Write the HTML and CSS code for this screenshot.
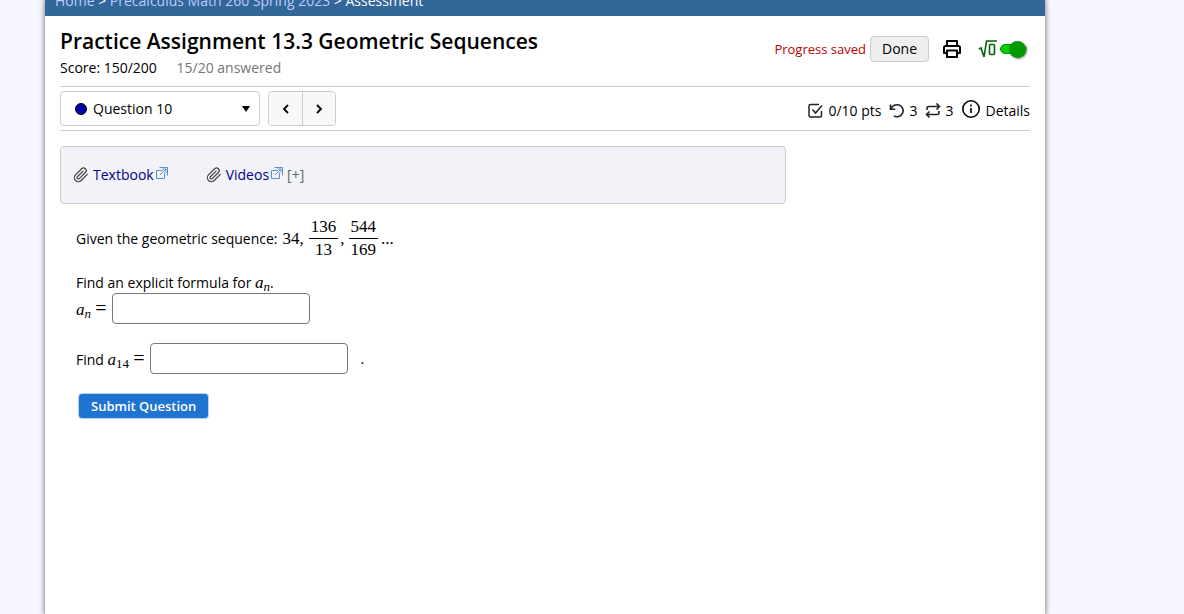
FILE: index.html
```html
<!DOCTYPE html>
<html lang="en">
<head>
    <meta charset="UTF-8">
    <meta name="viewport" content="width=device-width, initial-scale=1.0">
    <title>Practice Assignment 13.3 Geometric Sequences</title>
    <link rel="stylesheet" href="styles.css">
</head>
<body>
    <div class="page">
        <nav class="breadcrumb">
            <div><a href="#">Home</a> &gt; <a href="#">Precalculus Math 260 Spring 2023</a> &gt; Assessment</div>
        </nav>

        <div class="content">
            <header class="assess-header">
                <div class="assess-info">
                    <h1>Practice Assignment 13.3 Geometric Sequences</h1>
                    <p class="score">Score: 150/200 <span class="answered">15/20 answered</span></p>
                </div>
                <div class="assess-actions">
                    <span class="saved">Progress saved</span>
                    <button type="button" class="done-button">Done</button>
                    <button type="button" class="icon-button" aria-label="Print">
                        <svg width="20" height="20" viewBox="0 0 20 20" fill="none" stroke="#000" stroke-width="2" stroke-linejoin="round">
                            <path d="M5 6V2h10v4M5 14H2V8.500Q2 7 3.500 7h13Q18 7 18 8.500V14h-3"/>
                            <path d="M5 11.500h10V18H5z"/>
                        </svg>
                    </button>
                    <label class="math-toggle">
                        <svg width="20" height="20" viewBox="0 0 20 20" fill="none" stroke="#006400" stroke-width="1.600" role="img" aria-label="Math input">
                            <path d="M1 10l2-1 3 9L8.500 2H19"/>
                            <rect x="11.500" y="5.500" width="5" height="10" rx="1"/>
                        </svg>
                        <input type="checkbox" class="toggle" checked>
                    </label>
                </div>
            </header>

            <div class="question-bar">
                <div class="question-nav">
                    <div class="question-picker">
                        <span class="status-dot"></span>
                        <select aria-label="Question">
                            <option>Question 10</option>
                        </select>
                        <svg class="caret" width="8" height="6" viewBox="0 0 8 6"><path d="M0 0h8L4 6z"/></svg>
                    </div>
                    <div class="pager">
                        <button type="button" aria-label="Previous question">
                            <svg width="8" height="10" viewBox="0 0 8 10" fill="none" stroke="#000" stroke-width="1.800"><path d="M6 1L2 5l4 4"/></svg>
                        </button>
                        <button type="button" aria-label="Next question">
                            <svg width="8" height="10" viewBox="0 0 8 10" fill="none" stroke="#000" stroke-width="1.800"><path d="M2 1l4 4-4 4"/></svg>
                        </button>
                    </div>
                </div>
                <div class="question-stats">
                    <span class="stat">
                        <svg width="16" height="16" viewBox="0 0 16 16" fill="none" stroke="#222" stroke-width="1.500">
                            <path d="M11 1.500H2.500Q1 1.500 1 3v9.500Q1 14 2.500 14H12q1.500 0 1.500-1.500V8"/>
                            <path d="M4.500 6.500l3 3.500 6.500-7.500"/>
                        </svg>
                        0/10 pts
                    </span>
                    <span class="stat">
                        <svg width="16" height="16" viewBox="0 0 16 16" fill="none" stroke="#222" stroke-width="1.600">
                            <path d="M1.500 1.500v4.700H6.200"/>
                            <path d="M2 6A6.200 6 0 1 1 5 13"/>
                        </svg>
                        3
                    </span>
                    <span class="stat">
                        <svg width="16" height="16" viewBox="0 0 16 16" fill="none" stroke="#222" stroke-width="1.600">
                            <path d="M11.500.5l3 3-3 3M14.500 3.500H4Q2 3.500 2 5.500V7"/>
                            <path d="M4.500 8.500l-3 3 3 3M1.500 11.500H12q2 0 2-2V8"/>
                        </svg>
                        3
                    </span>
                    <button type="button" class="details-button">
                        <svg class="info" width="20" height="20" viewBox="0 0 20 20" fill="none" stroke="#000" stroke-width="1.600">
                            <circle cx="10" cy="10" r="8.200"/>
                            <path d="M10 9v5M10 5.500v2"/>
                        </svg>
                        Details
                    </button>
                </div>
            </div>

            <div class="help-box">
                <div class="help-item">
                    <svg width="16" height="16" viewBox="0 0 24 24" fill="none" stroke="#444" stroke-width="1.800" stroke-linecap="round">
                        <path d="M21.440 11.050l-9.190 9.190a6 6 0 0 1-8.490-8.490l9.190-9.190a4 4 0 0 1 5.660 5.660l-9.200 9.190a2 2 0 0 1-2.830-2.830l8.490-8.480"/>
                    </svg>
                    <a href="#">Textbook</a>
                    <svg class="external" width="12" height="12" viewBox="0 0 12 12" fill="none" stroke="#5b94c4">
                        <path d="M6.500 3.500h-6v8h8v-6M3.500.5h8v8M4 8l6-6M6.500 2h3.500v3.500"/>
                    </svg>
                </div>
                <div class="help-item">
                    <svg width="16" height="16" viewBox="0 0 24 24" fill="none" stroke="#444" stroke-width="1.800" stroke-linecap="round">
                        <path d="M21.440 11.050l-9.190 9.190a6 6 0 0 1-8.490-8.490l9.190-9.190a4 4 0 0 1 5.660 5.660l-9.200 9.190a2 2 0 0 1-2.830-2.830l8.490-8.480"/>
                    </svg>
                    <a href="#">Videos</a>
                    <svg class="external" width="12" height="12" viewBox="0 0 12 12" fill="none" stroke="#5b94c4">
                        <path d="M6.500 3.500h-6v8h8v-6M3.500.5h8v8M4 8l6-6M6.500 2h3.500v3.500"/>
                    </svg>
                    <button type="button" class="expand-button">[+]</button>
                </div>
            </div>

            <form class="question">
                <p class="sequence">
                    <span>Given the geometric sequence:</span>
                    <span class="math first-term">34,</span>
                    <span class="math fraction"><span>136</span><span>13</span></span>
                    <span class="math comma">,</span>
                    <span class="math fraction"><span>544</span><span>169</span></span>
                    <span class="math dots">...</span>
                </p>
                <p class="prompt">Find an explicit formula for <span class="math"><i>a<sub>n</sub></i></span>.</p>
                <div class="answer-row">
                    <label for="formula"><span class="math"><i>a<sub>n</sub></i> <span class="equals">=</span></span></label>
                    <input type="text" id="formula">
                </div>
                <div class="answer-row">
                    <label for="term">Find <span class="math"><i>a</i><sub>14</sub> <span class="equals">=</span></span></label>
                    <input type="text" id="term">
                    <span class="period">.</span>
                </div>
                <button type="button" class="submit-button">Submit Question</button>
            </form>
        </div>
    </div>
</body>
</html>
```
FILE: styles.css
```css
* {
    margin: 0;
    padding: 0;
    box-sizing: border-box;
}

body {
    background-color: #f6f7ff;
    font-family: "Trebuchet MS", "Open Sans", sans-serif;
    font-size: 14px;
    line-height: 20px;
    color: #000;
}

button,
input,
select {
    font: inherit;
    color: inherit;
}

button {
    cursor: pointer;
}

svg {
    display: block;
    flex: none;
}

.page {
    margin: 0 139px 0 45px;
    min-height: 100vh;
    background: #fff;
    box-shadow: 0 0 5px 1px #889;
}

/* Breadcrumb */
.breadcrumb {
    display: flex;
    align-items: flex-end;
    height: 16px;
    padding: 0 10px 5px;
    overflow: hidden;
    background: #336699;
    color: #fff;
}

.breadcrumb a {
    color: #bbccff;
    text-decoration: none;
}

.content {
    padding: 12px 15px;
}

/* Header */
.assess-header {
    display: flex;
    justify-content: space-between;
    padding-bottom: 8px;
    border-bottom: 1px solid #ccc;
}

h1 {
    font-size: 21px;
    line-height: 26px;
    font-weight: 600;
}

.score {
    padding-top: 4px;
}

.answered {
    margin-left: 16px;
    color: #757575;
}

.assess-actions {
    display: flex;
    align-items: center;
    height: 42px;
}

.saved {
    margin-right: 4px;
    font-size: 13px;
    color: #b00;
}

.done-button {
    padding: 2px 11px;
    border: 1px solid #ccc;
    border-radius: 4px;
    background: #eee;
}

.icon-button {
    margin: 0 16px 0 13px;
    border: none;
    background: none;
}

.math-toggle {
    display: flex;
    align-items: center;
    gap: 2px;
}

.toggle {
    appearance: none;
    display: flex;
    align-items: center;
    justify-content: flex-end;
    width: 27px;
    height: 10px;
    margin-right: 3px;
    border: 1px solid #090;
    border-radius: 5px;
    background: #0c0;
}

.toggle::after {
    content: "";
    flex: none;
    width: 17px;
    height: 17px;
    border-radius: 50%;
    background: #090;
    box-shadow: 1px 1px 2px #888;
}

/* Question bar */
.question-bar {
    display: flex;
    justify-content: space-between;
    align-items: center;
    padding: 4px 0;
    border-bottom: 1px solid #ccc;
}

.question-nav {
    display: flex;
    gap: 8px;
}

.question-picker {
    display: flex;
    align-items: center;
    width: 200px;
    height: 35px;
    padding: 0 9px 0 14px;
    border: 1px solid #ccc;
    border-radius: 4px;
}

.status-dot {
    width: 12px;
    height: 12px;
    margin-right: 6px;
    border: 1px solid #000;
    border-radius: 50%;
    background: #00a;
}

.question-picker select {
    appearance: none;
    flex: 1;
    border: none;
    background: none;
}

.pager {
    display: flex;
    border: 1px solid #ccc;
    border-radius: 4px;
    overflow: hidden;
}

.pager button {
    display: flex;
    align-items: center;
    justify-content: center;
    width: 33px;
    border: none;
    background: #f8f8f8;
}

.pager button + button {
    border-left: 1px solid #ccc;
}

.question-stats {
    display: flex;
    align-items: center;
    gap: 8px;
    padding-top: 4px;
}

.stat {
    display: flex;
    align-items: center;
    gap: 4px;
}

.details-button {
    display: flex;
    align-items: center;
    gap: 4px;
    border: none;
    background: none;
}

.info {
    margin-bottom: 4px;
}

/* Help links */
.help-box {
    display: flex;
    gap: 38px;
    max-width: 726px;
    margin-top: 15px;
    padding: 18px 12px;
    border: 1px solid #ccc;
    border-radius: 4px;
    background: #f2f2f9;
}

.help-item {
    display: flex;
    align-items: center;
}

.help-item a {
    margin: 0 2px 0 4px;
    color: #00008b;
    text-decoration: none;
}

.external {
    margin-bottom: 4px;
}

.expand-button {
    margin-left: 4px;
    border: none;
    background: none;
    color: #666;
}

/* Question body */
.question {
    padding: 12px 16px;
}

.math {
    font-family: "Liberation Serif", serif;
    font-size: 17px;
}

.math sub {
    font-size: 13px;
    line-height: 0;
    vertical-align: -3px;
}

.equals {
    font-size: 20px;
    line-height: 20px;
}

.sequence {
    display: flex;
    align-items: center;
    margin-bottom: 12px;
    white-space: nowrap;
}

.first-term {
    margin: 0 5px;
}

.fraction {
    display: flex;
    flex-direction: column;
    text-align: center;
}

.fraction span {
    padding: 1px 2px;
}

.fraction span:first-child {
    border-bottom: 1px solid #000;
}

.comma {
    margin: 0 4px 0 2px;
}

.dots {
    margin-left: 3px;
}

.answer-row {
    display: flex;
    align-items: center;
    gap: 5px;
    margin-bottom: 19px;
}

.answer-row input {
    width: 198px;
    height: 31px;
    padding: 4px;
    border: 1px solid #777;
    border-radius: 4px;
    background: #fff;
}

.period {
    margin-left: 8px;
}

.submit-button {
    margin-left: 2px;
    padding: 2px 12px;
    border: 1px solid #b5d3f2;
    border-radius: 4px;
    background: #1f74d1;
    color: #fff;
    font-size: 13px;
    font-weight: 600;
}
```
